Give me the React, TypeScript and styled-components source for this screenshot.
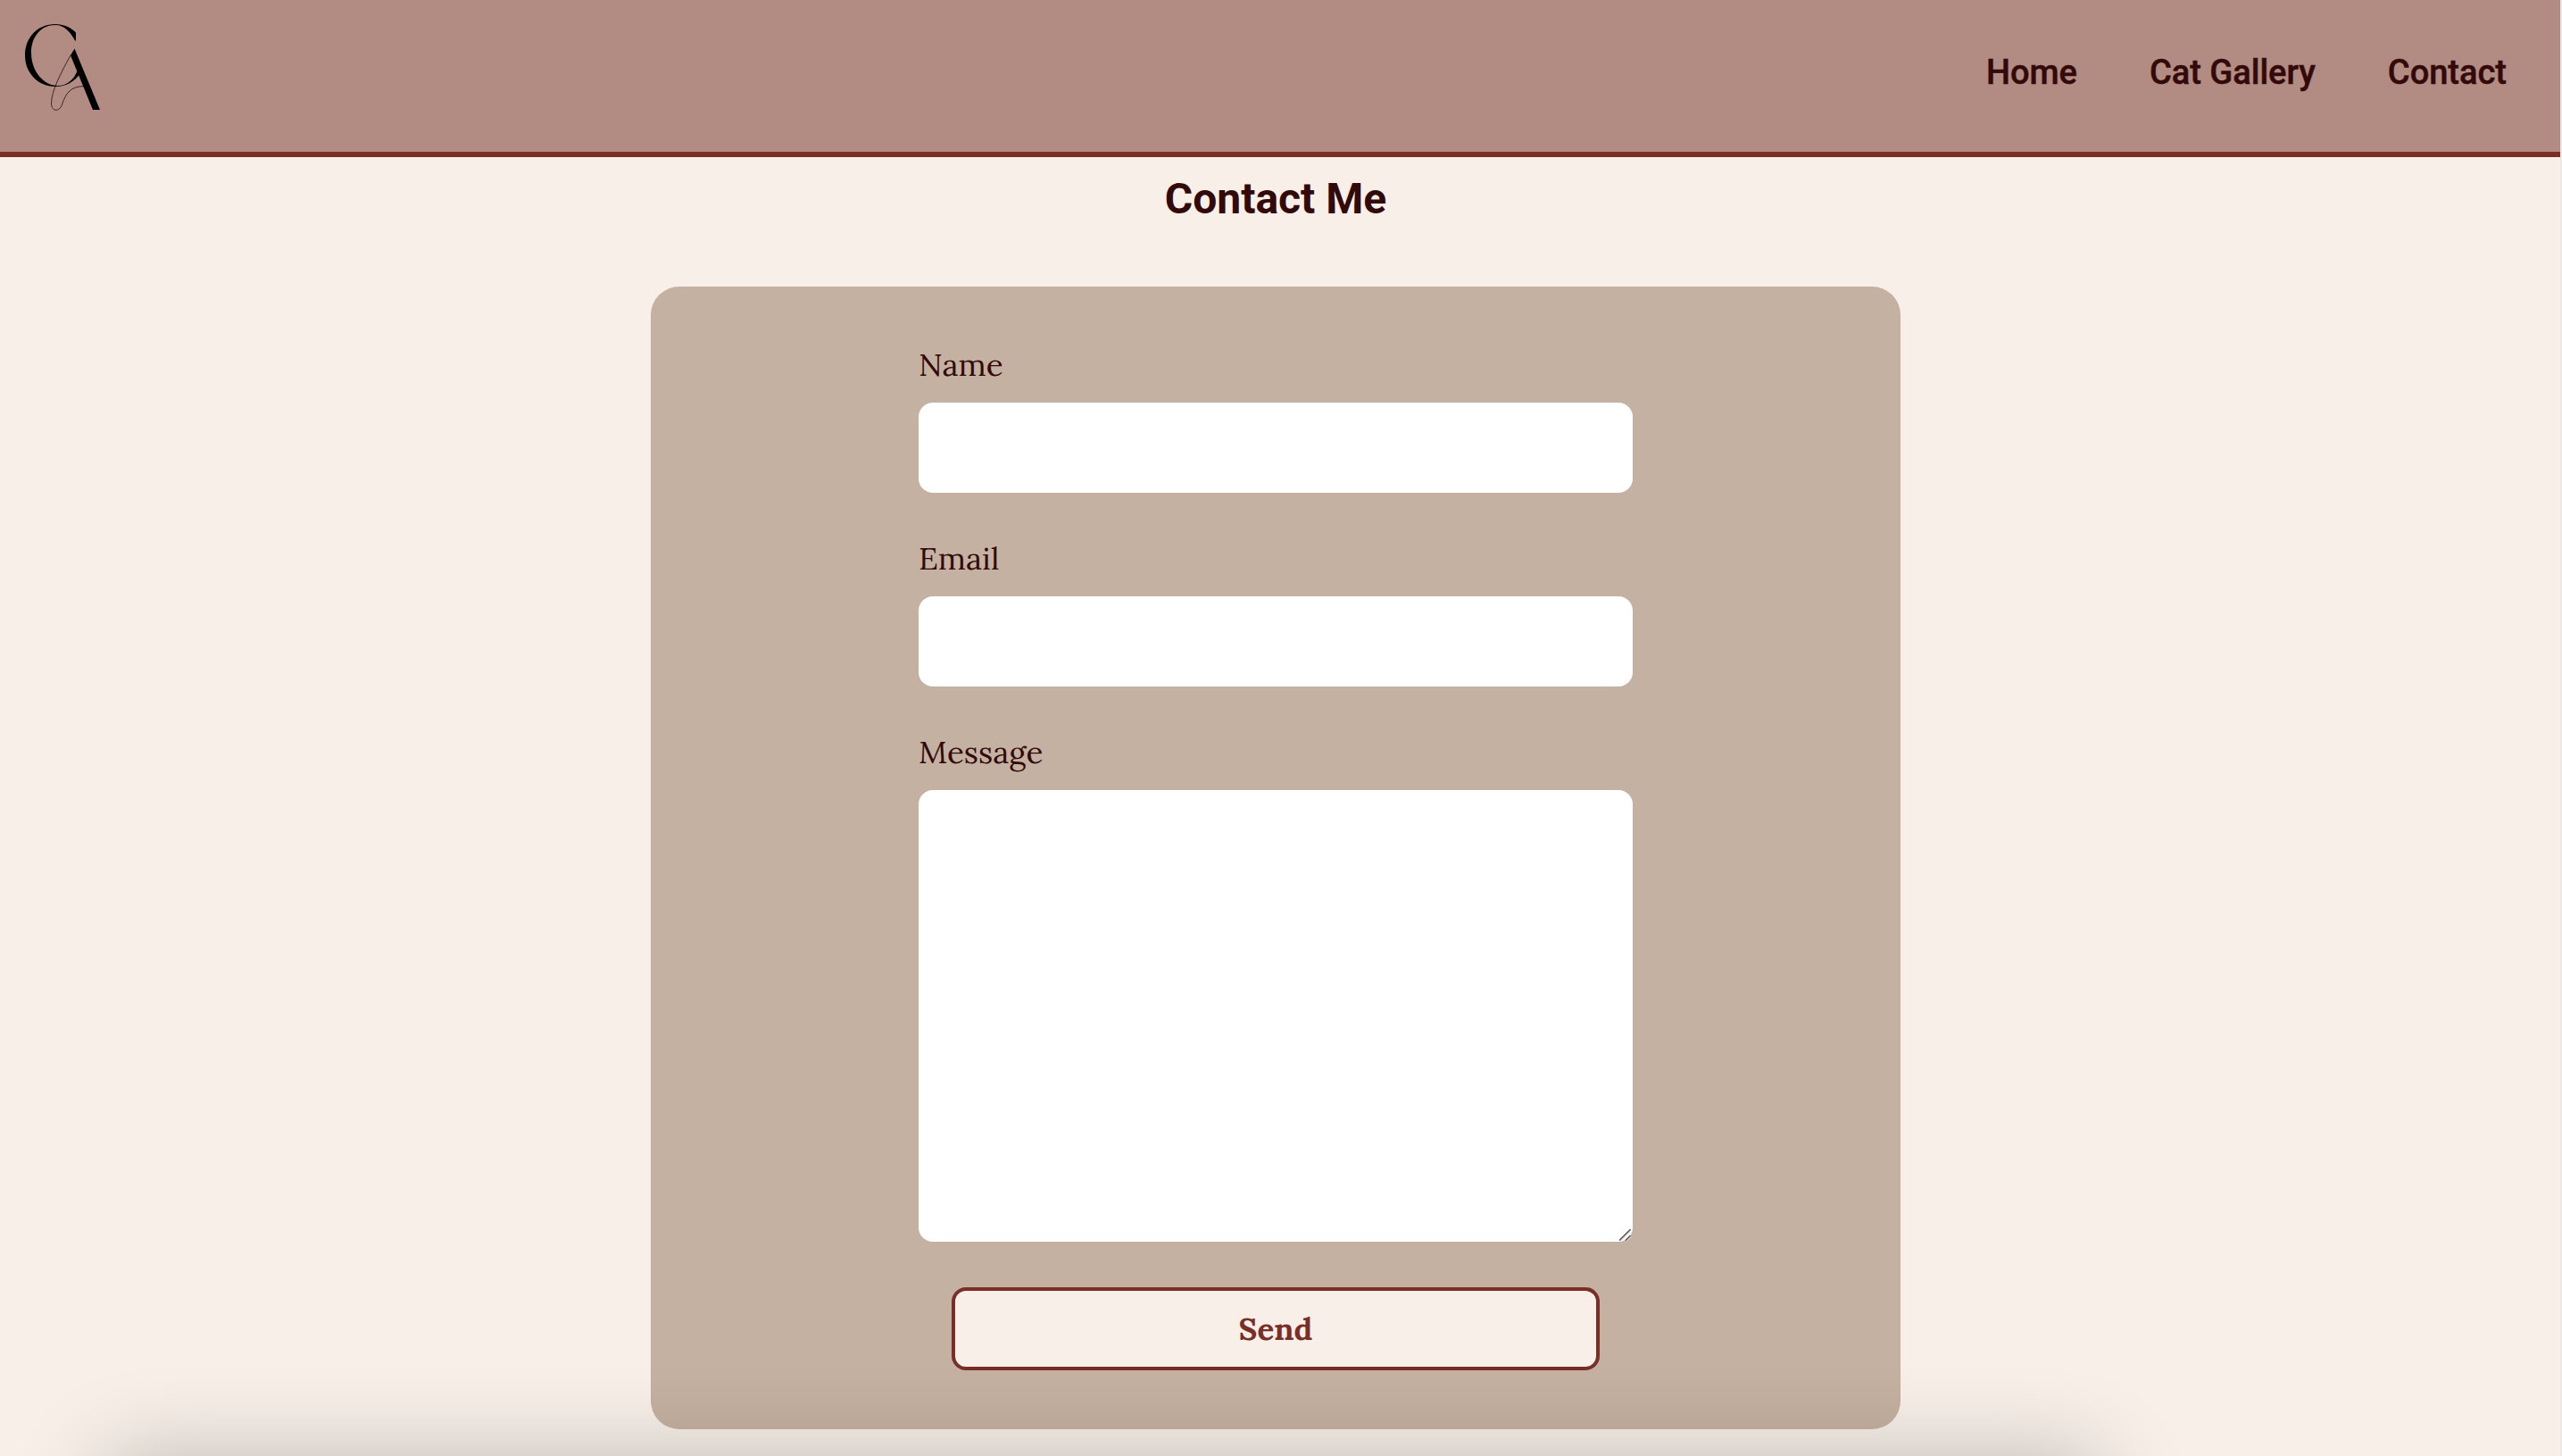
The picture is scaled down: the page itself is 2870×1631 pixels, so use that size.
import React from "react";
import styled, { createGlobalStyle } from "styled-components";

const color = {
  page: "#f7efe8",
  bar: "#b28b82",
  accent: "#792e28",
  ink: "#330a0a",
  card: "#c5b1a1",
};

const sans = `Roboto, "Liberation Sans", sans-serif`;
const serif = `Lora, "Liberation Serif", serif`;

const GlobalStyle = createGlobalStyle`
  *, *::before, *::after { box-sizing: border-box; }
  html { background: #e8e8e8; }
  body { margin: 0; overflow: hidden; color: ${color.ink}; font-family: ${serif}; }
`;

const Page = styled.div`
  min-height: 100vh;
  margin-right: 2px;
  background: ${color.page};
`;

const Header = styled.header`
  display: flex;
  align-items: flex-start;
  justify-content: space-between;
  height: 176px;
  padding: 24px 60px 0 24px;
  background: ${color.bar};
  border-bottom: 6px solid ${color.accent};
`;

const LogoLink = styled.a`
  display: block;
  line-height: 0;
  color: #000;
`;

const Nav = styled.nav`
  display: flex;
  gap: 81px;
  padding-top: 33px;
`;

const NavLink = styled.a`
  font: 500 38px/48px ${sans};
  -webkit-text-stroke: 0.5px currentColor;
  color: ${color.ink};
  text-decoration: none;
`;

const Main = styled.main`
  display: flex;
  flex-direction: column;
  align-items: center;
  padding: 19px 10px 30px 0;
`;

const Title = styled.h1`
  margin: 0 0 70px;
  font: 700 48px/56px ${sans};
`;

const Form = styled.form`
  display: flex;
  flex-direction: column;
  align-items: center;
  gap: 50px;
  width: 100%;
  max-width: 1400px;
  padding: 64px 32px 66px;
  background: ${color.card};
  border-radius: 32px;
`;

const Field = styled.div`
  display: flex;
  flex-direction: column;
  gap: 18px;
  width: 100%;
  max-width: 800px;
`;

const Label = styled.label`
  font-size: 35px;
  line-height: 48px;
`;

const Input = styled.input`
  width: 100%;
  height: 101px;
  padding: 0 24px;
  border: 0;
  border-radius: 16px;
  background: #fff;
  color: inherit;
  font: 35px ${serif};
`;

const TextAreaWrap = styled.div`
  position: relative;
`;

const TextArea = styled(Input).attrs({ as: "textarea" })`
  display: block;
  height: 506px;
  padding: 24px;
  resize: vertical;

  &::-webkit-resizer {
    background: transparent;
  }
`;

const Grip = styled.svg`
  position: absolute;
  right: 0;
  bottom: 0;
  pointer-events: none;
`;

const SendButton = styled.button`
  width: 100%;
  max-width: 726px;
  height: 93px;
  margin-top: 1px;
  border: 4px solid ${color.accent};
  border-radius: 16px;
  background: ${color.page};
  color: ${color.accent};
  font: 700 35px ${serif};
`;

const BottomShade = styled.div`
  position: fixed;
  top: 100%;
  left: 4%;
  right: 18%;
  height: 200px;
  border-radius: 24px;
  box-shadow: 0 0 100px rgba(0, 0, 0, 0.22);
  pointer-events: none;
`;

function Logo() {
  return (
    <svg width="92" height="104" viewBox="24 24 92 104" role="img" aria-label="CA">
      <path
        d="M85 36.500C79 30.500 71 27 62 27C42 27 28 42 28 62C28 82 43 97 62 97C74 97 84 91 90 82L87 78C83 90 74 96 65 96C49 96 35 80 35 59C35 41 46 28 62 28C72 28 79 36 84 45.500L85 45.500Z"
        fill="currentColor"
      />
      <path d="M83.500 54.500L112 123H104L79 62Z" fill="currentColor" />
      <path
        d="M79 62C68 82 57.500 102 57.500 116C58 126 67 125 69.500 117C74 104 79 97 94 96.500"
        fill="none"
        stroke="currentColor"
        strokeWidth="0.700"
      />
    </svg>
  );
}

export default function App() {
  return (
    <>
      <GlobalStyle />
      <Page>
        <Header>
          <LogoLink href="#home">
            <Logo />
          </LogoLink>
          <Nav>
            <NavLink href="#home">Home</NavLink>
            <NavLink href="#gallery">Cat Gallery</NavLink>
            <NavLink href="#contact">Contact</NavLink>
          </Nav>
        </Header>
        <Main>
          <Title>Contact Me</Title>
          <Form onSubmit={(e) => e.preventDefault()}>
            <Field>
              <Label htmlFor="name">Name</Label>
              <Input id="name" type="text" />
            </Field>
            <Field>
              <Label htmlFor="email">Email</Label>
              <Input id="email" type="email" />
            </Field>
            <Field>
              <Label htmlFor="message">Message</Label>
              <TextAreaWrap>
                <TextArea id="message" />
                <Grip width="16" height="16" viewBox="0 0 16 16" aria-hidden="true">
                  <path d="M2 15L14 3M9 15L14 10" stroke="#d8d8d8" strokeWidth="1.5" />
                  <path d="M1 14.500L13.500 2M8 14.500L13.500 9" stroke="#555" strokeWidth="1.500" />
                </Grip>
              </TextAreaWrap>
            </Field>
            <SendButton type="submit">Send</SendButton>
          </Form>
        </Main>
      </Page>
      <BottomShade />
    </>
  );
}
